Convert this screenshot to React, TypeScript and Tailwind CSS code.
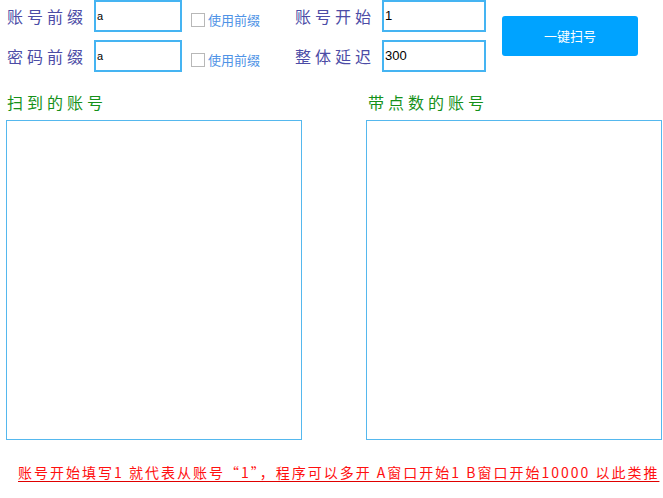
import React from 'react';

const cjk = '"Noto Sans CJK SC", "Noto Sans", sans-serif';

function Check({ label }: { label: string }) {
  return (
    <div className="flex w-[113px] items-center pl-[9px] pt-[8px]">
      <span className="h-[14px] w-[14px] border border-[#b8b8b8] bg-white" />
      <span className="ml-[3px] text-[13px] text-[#4f93e6]" style={{ fontFamily: cjk }}>
        {label}
      </span>
    </div>
  );
}

function Label({ text, width, pad }: { text: string; width: string; pad: string }) {
  return (
    <div
      className={`${width} ${pad} text-[16px] leading-[20px] tracking-[4px] text-[#4c4ca6]`}
      style={{ fontFamily: cjk }}
    >
      {text}
    </div>
  );
}

function Field({ value, width, small }: { value: string; width: string; small?: boolean }) {
  return (
    <div
      className={`${width} flex h-[32px] items-center border-2 border-[#45b4f2] bg-white pl-[1px] text-black ${
        small ? 'text-[11px]' : 'text-[13px]'
      }`}
      style={{ fontFamily: '"Liberation Sans", Arial, sans-serif' }}
    >
      {value}
    </div>
  );
}

export default function App() {
  return (
    <div className="h-[498px] w-[663px] overflow-hidden bg-white">
      <div className="flex">
        <div className="flex flex-col gap-[8px]">
          <div className="flex h-[32px] items-center">
            <Label text="账号前缀" width="w-[94px]" pad="pl-[7px]" />
            <Field value="a" width="w-[88px]" small />
            <Check label="使用前缀" />
            <Label text="账号开始" width="w-[87px]" pad="" />
            <Field value="1" width="w-[104px]" />
          </div>
          <div className="flex h-[32px] items-center">
            <Label text="密码前缀" width="w-[94px]" pad="pl-[7px]" />
            <Field value="a" width="w-[88px]" small />
            <Check label="使用前缀" />
            <Label text="整体延迟" width="w-[87px]" pad="" />
            <Field value="300" width="w-[104px]" />
          </div>
        </div>
        <button
          className="ml-[16px] mt-[16px] flex h-[40px] w-[136px] items-center justify-center rounded-[3px] bg-[#00a3ff] text-[13px] text-white"
          style={{ fontFamily: cjk }}
        >
          一键扫号
        </button>
      </div>

      <div
        className="mt-[20px] flex h-[20px] text-[16px] leading-[20px] tracking-[4px] text-[#16911a]"
        style={{ fontFamily: cjk }}
      >
        <span className="w-[368px] pl-[7px]">扫到的账号</span>
        <span>带点数的账号</span>
      </div>

      <div className="mt-[8px] flex">
        <div className="ml-[6px] h-[320px] w-[296px] border border-[#55b8ee]" />
        <div className="ml-[64px] h-[320px] w-[296px] border border-[#55b8ee]" />
      </div>

      <div
        className="mt-[22px] pl-[18px] text-[14px] leading-[20px] tracking-[2px] whitespace-nowrap text-[#ff1010] underline decoration-[#e00000] underline-offset-[3px]"
        style={{ fontFamily: cjk }}
      >
        账号开始填写1 就代表从账号“1”，程序可以多开 A窗口开始1 B窗口开始10000 以此类推
      </div>
    </div>
  );
}
